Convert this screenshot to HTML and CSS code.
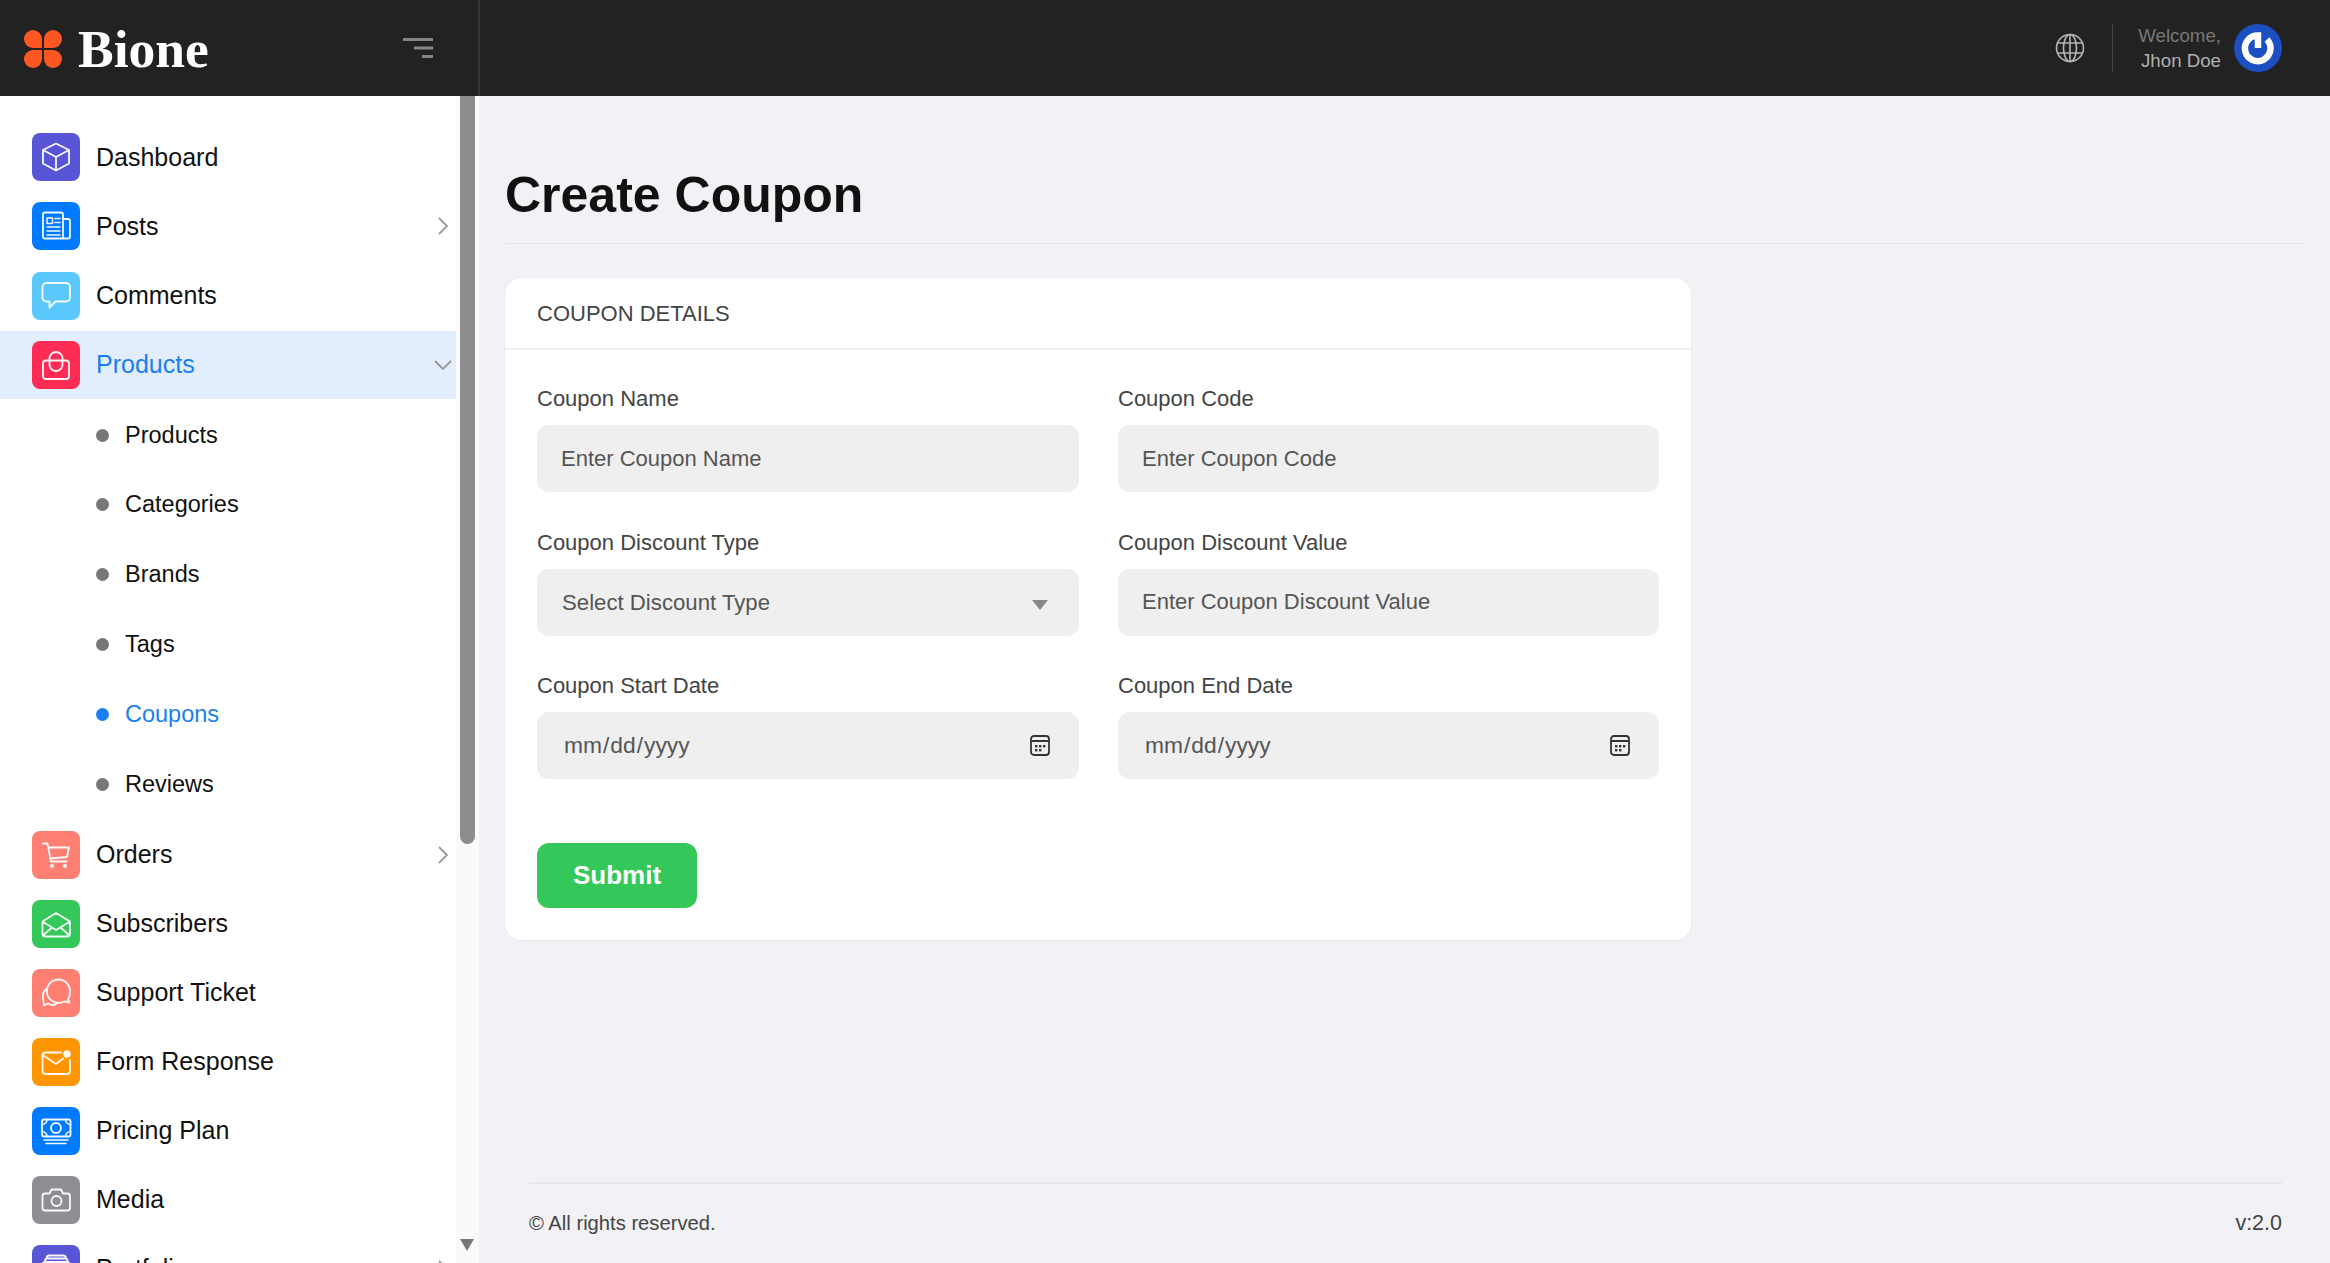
FILE: index.html
```html
<!DOCTYPE html>
<html lang="en">
<head>
<meta charset="utf-8">
<title>Create Coupon</title>
<link rel="stylesheet" href="styles.css">
</head>
<body>
<header class="topbar">
  <div class="brand">
    <a class="logo" href="#">
      <svg class="logo-mark" viewBox="0 0 38 38"><g fill="#ff5722"><path d="M18 18H9A9 9 0 1 1 18 9Z"/><path d="M20 18V9A9 9 0 1 1 29 18Z"/><path d="M18 20V29A9 9 0 1 1 9 20Z"/><path d="M20 20H29A9 9 0 1 1 20 29Z"/></g></svg>
      <span class="logo-text">Bione</span>
    </a>
    <svg class="menu-toggle" viewBox="0 0 30 20"><path d="M0 1.500H30M11 10H30M19 18.500H30" fill="none" stroke="#858585" stroke-width="3"/></svg>
  </div>
  <div class="top-actions">
    <svg class="globe" viewBox="0 0 30 30" fill="none" stroke="#b5b5b5" stroke-width="1.600"><circle cx="15" cy="15" r="13.500"/><ellipse cx="15" cy="15" rx="6.500" ry="13.500"/><path d="M15 1.500V28.500M2.500 10H27.500M2.500 20H27.500"/></svg>
    <div class="divider"></div>
    <div class="welcome"><span class="welcome-hi">Welcome,</span><span class="welcome-name">Jhon Doe</span></div>
    <svg class="avatar" viewBox="0 0 48 48"><circle cx="24" cy="24" r="24" fill="#1c50c2"/><path d="M24 24V11.500A12.800 12.800 0 1 0 33 15.500" fill="none" stroke="#fff" stroke-width="6.500"/></svg>
  </div>
</header>
<div class="shell">
  <aside class="sidebar">
    <nav class="nav">
      <a class="nav-row" href="#"><span class="tile tile-indigo"><svg viewBox="0 0 48 48"><path d="M24 10.500L37 17V30.500L24 37.500L11 30.500V17ZM11 17L24 24L37 17M24 24V37.500"/></svg></span><span class="nav-label">Dashboard</span></a>
      <a class="nav-row" href="#"><span class="tile tile-blue"><svg viewBox="0 0 48 48"><path d="M13 10.500H29A2 2 0 0 1 31 12.500V36.500H13A2 2 0 0 1 11 34.500V12.500A2 2 0 0 1 13 10.500ZM31 17H36A2 2 0 0 1 38 19V34.500A2 2 0 0 1 36 36.500H31"/><path class="thin" d="M15 16H20.500V21.500H15ZM23 16.500H28M23 20.500H28M15 25H28M15 29H28M15 33H28"/></svg></span><span class="nav-label">Posts</span><svg class="chev" viewBox="0 0 10 18"><path d="M1 1L9 9L1 17"/></svg></a>
      <a class="nav-row" href="#"><span class="tile tile-sky"><svg viewBox="0 0 48 48"><path d="M14.500 11H34A4 4 0 0 1 38 15V25.500A4 4 0 0 1 34 29.500H23.500L17.500 35.500V29.500H14.500A4 4 0 0 1 10.500 25.500V15A4 4 0 0 1 14.500 11Z"/></svg></span><span class="nav-label">Comments</span></a>
      <div class="nav-row nav-row-active"><span class="tile tile-rose"><svg viewBox="0 0 48 48"><rect x="11" y="19.500" width="26" height="18.500" rx="3"/><path d="M17.500 19.500V17.500A6.500 6.500 0 0 1 30.500 17.500V23.500A6.500 6.500 0 0 1 17.500 23.500V19.500"/></svg></span><span class="nav-label">Products</span><svg class="chev-down" viewBox="0 0 18 10"><path d="M1 1L9 9L17 1"/></svg></div>
      <ul class="subnav">
        <li class="sub-row">Products</li>
        <li class="sub-row">Categories</li>
        <li class="sub-row">Brands</li>
        <li class="sub-row">Tags</li>
        <li class="sub-row sub-row-active">Coupons</li>
        <li class="sub-row">Reviews</li>
      </ul>
      <a class="nav-row" href="#"><span class="tile tile-coral"><svg viewBox="0 0 48 48"><path d="M11 12.500H15.500L19 30.500H34.500M16.500 16.500H37L35 26L18 27.500"/><circle class="dot" cx="20" cy="35" r="2"/><circle class="dot" cx="33" cy="35" r="2"/></svg></span><span class="nav-label">Orders</span><svg class="chev" viewBox="0 0 10 18"><path d="M1 1L9 9L1 17"/></svg></a>
      <a class="nav-row" href="#"><span class="tile tile-green"><svg viewBox="0 0 48 48"><path d="M10.500 21.500L24 13L38 21.500V33.500A3 3 0 0 1 35 36.500H13.500A3 3 0 0 1 10.500 33.500ZM10.500 21.500L24 30L38 21.500M12 34.500L20 27.500M36.500 34.500L28.500 27.500"/></svg></span><span class="nav-label">Subscribers</span></a>
      <a class="nav-row" href="#"><span class="tile tile-coral"><svg viewBox="0 0 48 48"><path d="M26.500 10.500A11.500 11.500 0 0 1 38 22C38 26 37 29 36 30.500L37.500 33.500L32.500 32.500C30.500 33.500 28.500 33.800 26.500 33.800A11.600 11.600 0 0 1 26.500 10.500Z"/><path d="M14.500 20C11.500 22 10.500 25.500 11 29L12 36.500L16 34.500C19 36.500 22.500 36.500 25.500 34"/></svg></span><span class="nav-label">Support Ticket</span></a>
      <a class="nav-row" href="#"><span class="tile tile-orange"><svg viewBox="0 0 48 48"><path d="M29 14.500H13.500A3 3 0 0 0 10.500 17.500V33A3 3 0 0 0 13.500 36H35A3 3 0 0 0 38 33V22M11.500 17.500L24 26L31 20.500"/><circle class="solid" cx="35" cy="16" r="3.800"/></svg></span><span class="nav-label">Form Response</span></a>
      <a class="nav-row" href="#"><span class="tile tile-blue"><svg viewBox="0 0 48 48"><rect x="10" y="12.500" width="28.500" height="17" rx="2"/><circle cx="24" cy="21" r="5"/><path class="thin" d="M10 17.500A5 5 0 0 0 15 12.500M38.500 17.500A5 5 0 0 1 33.500 12.500M10 24.500A5 5 0 0 1 15 29.500M38.500 24.500A5 5 0 0 0 33.500 29.500M12 33H36M14 36.500H34"/></svg></span><span class="nav-label">Pricing Plan</span></a>
      <a class="nav-row" href="#"><span class="tile tile-gray"><svg viewBox="0 0 48 48"><path d="M13 17.500H17.500L19.500 13.500H29L31 17.500H35.500A2.500 2.500 0 0 1 38 20V32A2.500 2.500 0 0 1 35.500 34.500H13A2.500 2.500 0 0 1 10.500 32V20A2.500 2.500 0 0 1 13 17.500Z"/><circle cx="24.500" cy="25" r="5"/></svg></span><span class="nav-label">Media</span></a>
      <a class="nav-row" href="#"><span class="tile tile-indigo"><svg viewBox="0 0 48 48"><rect x="10.500" y="17" width="27.500" height="20" rx="3"/><path d="M14.500 13.500A3 3 0 0 1 17.500 10.500H31A3 3 0 0 1 34 13.500M13 17V16A2.500 2.500 0 0 1 15.500 13.500H33A2.500 2.500 0 0 1 35.500 16V17"/></svg></span><span class="nav-label">Portfolio</span><svg class="chev" viewBox="0 0 10 18"><path d="M1 1L9 9L1 17"/></svg></a>
    </nav>
    <div class="scroll-track">
      <div class="scroll-thumb"></div>
      <div class="scroll-arrow"></div>
    </div>
  </aside>
  <main class="main">
    <h1 class="page-title">Create Coupon</h1>
    <section class="card">
      <div class="card-head">COUPON DETAILS</div>
      <form class="card-body">
        <div class="form-grid">
          <label class="field"><span class="field-label">Coupon Name</span><input class="control" type="text" placeholder="Enter Coupon Name"></label>
          <label class="field"><span class="field-label">Coupon Code</span><input class="control" type="text" placeholder="Enter Coupon Code"></label>
          <label class="field"><span class="field-label">Coupon Discount Type</span><select class="control control-select"><option>Select Discount Type</option></select></label>
          <label class="field"><span class="field-label">Coupon Discount Value</span><input class="control" type="text" placeholder="Enter Coupon Discount Value"></label>
          <label class="field"><span class="field-label">Coupon Start Date</span><input class="control control-date" type="date"></label>
          <label class="field"><span class="field-label">Coupon End Date</span><input class="control control-date" type="date"></label>
        </div>
        <button class="submit" type="button">Submit</button>
      </form>
    </section>
    <footer class="footer"><span class="footer-copy">© All rights reserved.</span><span class="footer-version">v:2.0</span></footer>
  </main>
</div>
</body>
</html>
```
FILE: styles.css
```css
* { box-sizing: border-box; }
html, body { height: 100%; margin: 0; }
body {
  display: flex;
  flex-direction: column;
  height: 1263px;
  overflow: hidden;
  background: #f1f1f6;
  font-family: "Liberation Sans", Arial, sans-serif;
  color: #111;
}
a { color: inherit; text-decoration: none; }

.topbar { display: flex; flex: 0 0 96px; background: #222; }
.brand {
  display: flex;
  align-items: center;
  justify-content: space-between;
  width: 480px;
  padding: 0 45px 0 24px;
  border-right: 2px solid #333;
}
.logo { display: flex; align-items: center; gap: 16px; }
.logo-mark { width: 38px; height: 38px; margin-top: 2px; }
.logo-text { padding-top: 1px; font-family: "Liberation Serif", serif; font-weight: 700; font-size: 53.500px; line-height: 60px; color: #fff; }
.menu-toggle { width: 30px; height: 20px; }
.top-actions { flex: 1; display: flex; align-items: center; justify-content: flex-end; padding-right: 48px; }
.globe { width: 30px; height: 30px; }
.divider { width: 1px; height: 48px; margin: 0 25px 0 27px; background: #444; }
.welcome { display: flex; flex-direction: column; align-items: flex-end; font-size: 18.700px; line-height: 25px; }
.welcome-hi { color: #777; }
.welcome-name { color: #b0b0b0; }
.avatar { width: 48px; height: 48px; margin-left: 13px; }

.shell { flex: 1; display: flex; min-height: 0; }
.sidebar { display: flex; flex: 0 0 479px; background: #fff; overflow: hidden; }
.nav { flex: 0 0 456px; padding-top: 27px; overflow: hidden; }
.nav-row {
  display: flex;
  align-items: center;
  height: 68px;
  margin-bottom: 1.300px;
  padding: 0 8px 0 32px;
  font-size: 25px;
}
.subnav ~ .nav-row { margin-bottom: 1px; }
.nav-row-active { background: #e2eefd; color: #1a7ff0; }
.nav-label { flex: 1; margin-left: 16px; }
.tile { flex: 0 0 48px; width: 48px; height: 48px; border-radius: 8px; }
.tile svg { display: block; width: 48px; height: 48px; fill: none; stroke: #fff; stroke-width: 1.800; stroke-linejoin: round; stroke-linecap: round; opacity: .95; }
.tile svg .thin { stroke-width: 1.500; }
.tile svg .dot, .tile svg .solid { fill: #fff; stroke: none; }
.tile-indigo { background: #5856d6; }
.tile-blue { background: #007aff; }
.tile-sky { background: #5ac8fa; }
.tile-rose { background: #ff2d55; }
.tile-coral { background: #ff7f73; }
.tile-green { background: #34c759; }
.tile-orange { background: #ff9500; }
.tile-gray { background: #8e8e93; }
.chev { width: 10px; height: 18px; fill: none; stroke: #999; stroke-width: 1.800; }
.chev-down { width: 18px; height: 10px; margin-right: -4px; fill: none; stroke: #999; stroke-width: 1.800; }

.subnav { margin: 1px 0 2px; padding: 0; list-style: none; }
.sub-row {
  display: flex;
  align-items: center;
  gap: 16px;
  height: 69.800px;
  padding-left: 96px;
  font-size: 23.500px;
}
.sub-row::before { content: ""; width: 13px; height: 13px; border-radius: 50%; background: #777; }
.sub-row-active { color: #1a7ff0; }
.sub-row-active::before { background: #1a7ff0; }

.scroll-track {
  flex: 1;
  padding: 0 4px;
  background: #fafafa;
}
.scroll-thumb { height: 748px; border-radius: 0 0 8px 8px; background: #8c8c8c; }
.scroll-arrow {
  margin-top: 395px;
  width: 0;
  height: 0;
  border-style: solid;
  border-width: 12px 7.500px 0;
  border-color: #777 transparent transparent;
}

.main { flex: 1; display: flex; flex-direction: column; min-width: 0; padding: 0 25px 0 26px; }
.page-title {
  margin: 0;
  padding: 68px 0 17px;
  border-bottom: 1px solid #e6e6ea;
  font-size: 50px;
  line-height: 62px;
  font-weight: 700;
  color: #111;
}
.card {
  width: 1186px;
  margin-top: 34px;
  background: #fff;
  border-radius: 16px;
  box-shadow: 0 0 0 1px #ebebef;
}
.card-head {
  height: 72px;
  padding: 0 32px;
  border-bottom: 2px solid #f1f1f1;
  font-size: 22px;
  line-height: 71px;
  color: #444;
}
.card-body { padding: 35px 32px 32px; }
.form-grid { display: grid; grid-template-columns: 542px 541px; column-gap: 39px; row-gap: 36.500px; }
.field { display: flex; flex-direction: column; gap: 12px; }
.field-label { font-size: 22px; line-height: 28px; color: #444; }
.control {
  width: 100%;
  height: 67px;
  padding: 0 24px;
  border: 0;
  border-radius: 12px;
  background-color: #efefef;
  font-family: inherit;
  font-size: 22px;
  color: #555;
  outline: none;
}
.control::placeholder { color: #555; opacity: 1; }
.control-date { padding: 0 24px 0 26px; font-size: 22.800px; }
.control-date::-webkit-calendar-picker-indicator {
  width: 20px;
  height: 21px;
  margin-right: 5px;
  padding: 0;
  background: url("data:image/svg+xml,%3Csvg xmlns='http://www.w3.org/2000/svg' viewBox='0 0 20 21'%3E%3Crect x='1' y='1' width='18' height='19' rx='3' fill='none' stroke='%23333' stroke-width='1.800'/%3E%3Cpath d='M1 6H19' stroke='%23333' stroke-width='1.800'/%3E%3Cg fill='%23333'%3E%3Crect x='5' y='10' width='2.400' height='2.400'/%3E%3Crect x='9' y='10' width='2.400' height='2.400'/%3E%3Crect x='13' y='10' width='2.400' height='2.400'/%3E%3Crect x='5' y='14' width='2.400' height='2.400'/%3E%3Crect x='9' y='14' width='2.400' height='2.400'/%3E%3C/g%3E%3C/svg%3E") center / 20px 21px no-repeat;
}
.control-select {
  appearance: none;
  padding: 0 60px 0 25px;
  font-size: 22.200px;
  background-image: url("data:image/svg+xml,%3Csvg xmlns='http://www.w3.org/2000/svg' viewBox='0 0 16 10'%3E%3Cpath d='M0 0H16L8 10Z' fill='%23888'/%3E%3C/svg%3E");
  background-repeat: no-repeat;
  background-size: 16px 10px;
  background-position: right 31px top 31px;
}
.submit {
  display: block;
  width: 160px;
  height: 65px;
  margin-top: 64px;
  border: 0;
  border-radius: 12px;
  background: #34c759;
  font-family: inherit;
  font-size: 26px;
  font-weight: 700;
  color: #fff;
}
.footer {
  display: flex;
  justify-content: space-between;
  align-items: center;
  height: 81px;
  margin: auto 23px 0 24px;
  border-top: 2px solid #e8e8ec;
  color: #444;
}
.footer-copy { font-size: 20.200px; }
.footer-version { font-size: 21.500px; }
```
